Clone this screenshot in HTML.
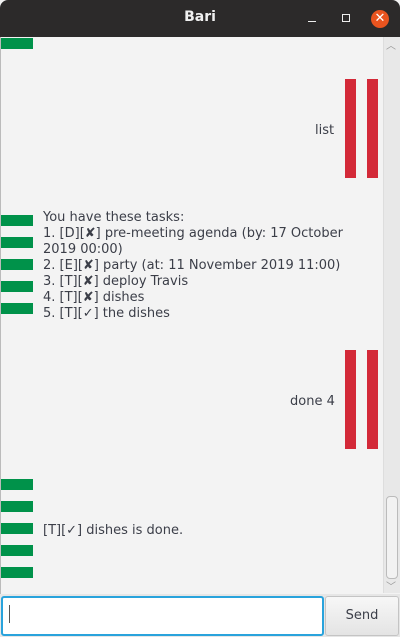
<!DOCTYPE html>
<html><head><style>
body{margin:0;width:400px;height:637px;background:#f3f3f3;position:relative;overflow:hidden;font-family:"DejaVu Sans","Liberation Sans",sans-serif;font-size:13px;color:#3b3e48}
.a{position:absolute}
.g{position:absolute;left:1px;width:32px;height:11px;background:#00924a}
.r{position:absolute;width:11px;background:#d32938}
.t{position:absolute;white-space:nowrap;line-height:16px}
</style></head><body>
<div class="a" style="left:0;top:0;width:400px;height:37px;background:#2c2a2a;border-radius:8px 8px 0 0"></div>
<div class="a" style="left:0;top:9px;width:400px;text-align:center;color:#f0f0f0;font-weight:bold;font-size:14px;font-family:'DejaVu Sans',sans-serif">Bari</div>
<div class="a" style="left:308px;top:21px;width:8px;height:1px;background:#eee"></div>
<div class="a" style="left:342px;top:14px;width:6px;height:6px;border:1px solid #eee"></div>
<div class="a" style="left:371px;top:10px;width:18px;height:18px;border-radius:50%;background:#e9541f;color:#fff;text-align:center;line-height:18px;font-size:13px">✕</div>
<div class="a" style="left:0;top:37px;width:1px;height:557px;background:#bbb"></div>
<div class="a" style="left:383px;top:37px;width:17px;height:556px;background:#e8e8e8;border-left:1px solid #ddd"></div>
<div class="a" style="left:386px;top:496px;width:10px;height:81px;background:#f2f2f2;border:1px solid #bbb;border-radius:4px"></div>
<div class="a" style="left:386px;top:37px;color:#999;font-size:10px">︿</div>
<div class="a" style="left:386px;top:578px;color:#999;font-size:10px">﹀</div>
<div class="g" style="top:38px"></div>
<div class="g" style="top:215px"></div><div class="g" style="top:237px"></div><div class="g" style="top:259px"></div><div class="g" style="top:281px"></div><div class="g" style="top:303px"></div>
<div class="g" style="top:479px"></div><div class="g" style="top:501px"></div><div class="g" style="top:523px"></div><div class="g" style="top:545px"></div><div class="g" style="top:567px"></div>
<div class="r" style="left:345px;top:79px;height:99px"></div><div class="r" style="left:367px;top:79px;height:99px"></div>
<div class="r" style="left:345px;top:350px;height:99px"></div><div class="r" style="left:367px;top:350px;height:99px"></div>
<div class="t" style="left:315px;top:123px">list</div>
<div class="t" style="left:290px;top:394px">done 4</div>
<div class="t" style="left:43px;top:210px">You have these tasks:<br>1. [D][✘] pre-meeting agenda (by: 17 October<br>2019 00:00)<br>2. [E][✘] party (at: 11 November 2019 11:00)<br>3. [T][✘] deploy Travis<br>4. [T][✘] dishes<br>5. [T][✓] the dishes</div>
<div class="t" style="left:43px;top:523px">[T][✓] dishes is done.</div>
<div class="a" style="left:0;top:594px;width:400px;height:43px;background:#e6e6e6"></div>
<div class="a" style="left:1px;top:596px;width:319px;height:36px;background:#fff;border:2px solid #29a3dc;border-radius:3px"></div>
<div class="a" style="left:9px;top:605px;width:1px;height:18px;background:#555"></div>
<div class="a" style="left:325px;top:596px;width:72px;height:38px;background:linear-gradient(#f7f7f7,#e4e4e4);border:1px solid #c4c4c4;border-radius:3px;text-align:center;line-height:38px">Send</div>
</body></html>
